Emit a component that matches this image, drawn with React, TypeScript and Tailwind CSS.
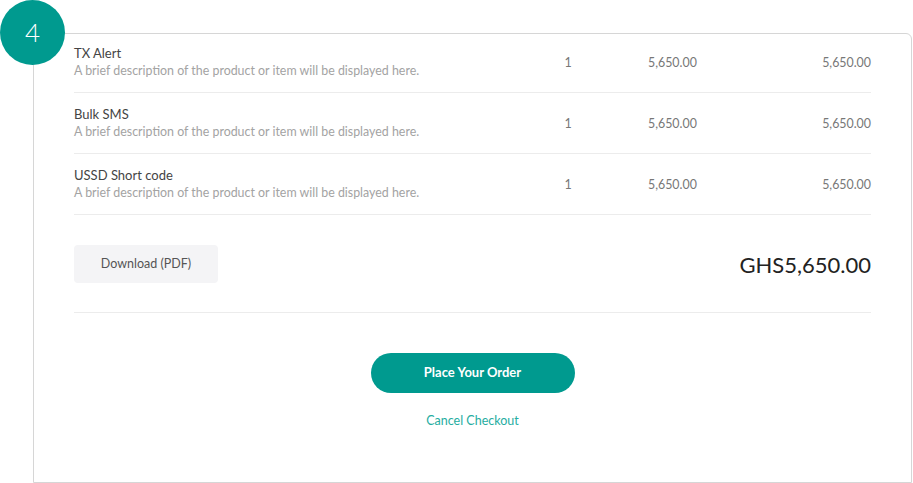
import React from 'react';

const items = [
  { name: 'TX Alert', qty: 1, price: '5,650.00', total: '5,650.00' },
  { name: 'Bulk SMS', qty: 1, price: '5,650.00', total: '5,650.00' },
  { name: 'USSD Short code', qty: 1, price: '5,650.00', total: '5,650.00' },
];

export default function App() {
  return (
    <div className="relative w-[913px] h-[483px] bg-white overflow-hidden" style={{ fontFamily: 'Lato, "Noto Sans", sans-serif' }}>
      {/* step badge */}
      <div className="absolute left-0 top-0 z-10 w-[65px] h-[65px] rounded-full bg-[#009a8f] flex items-center justify-center text-white text-[26px] font-light">
        4
      </div>

      <div className="ml-[33px] mt-[33px] w-[879px] h-[450px] border border-[#d6d6d6] rounded-tr-md px-[40px]">
        {/* line items */}
        <div>
          {items.map((item, i) => (
            <div
              key={item.name}
              className={`grid grid-cols-[466px_56px_1fr_auto] items-center border-b border-[#ececec] ${i === 0 ? 'h-[59px] pt-[1px]' : 'h-[61px] pt-[3px]'}`}
            >
              <div className="pb-[4px]">
                <p className="text-[13px] leading-[18px] text-[#444]">{item.name}</p>
                <p className="text-[12.4px] leading-[18px] text-[#a3a3a3]">A brief description of the product or item will be displayed here.</p>
              </div>
              <div className="text-center text-[12.5px] text-[#777]">{item.qty}</div>
              <div className="pl-[52px] text-[12.4px] text-[#777]">{item.price}</div>
              <div className="text-right text-[12.4px] text-[#777]">{item.total}</div>
            </div>
          ))}
        </div>

        {/* totals */}
        <div className="flex items-center justify-between pt-[30px] pb-[29px] border-b border-[#ececec]">
          <button className="w-[144px] h-[38px] rounded bg-[#f4f4f6] text-[12.5px] text-[#555]">Download (PDF)</button>
          <span className="text-[22px] text-[#222]">GHS5,650.00</span>
        </div>

        {/* actions */}
        <div className="flex flex-col items-center pt-[40px]">
          <button className="w-[204px] h-[40px] rounded-full bg-[#009a8f] text-white text-[13px] font-bold">Place Your Order</button>
          <a className="mt-[19px] text-[12.5px] leading-[18px] text-[#26ada1]">Cancel Checkout</a>
        </div>
      </div>
    </div>
  );
}
